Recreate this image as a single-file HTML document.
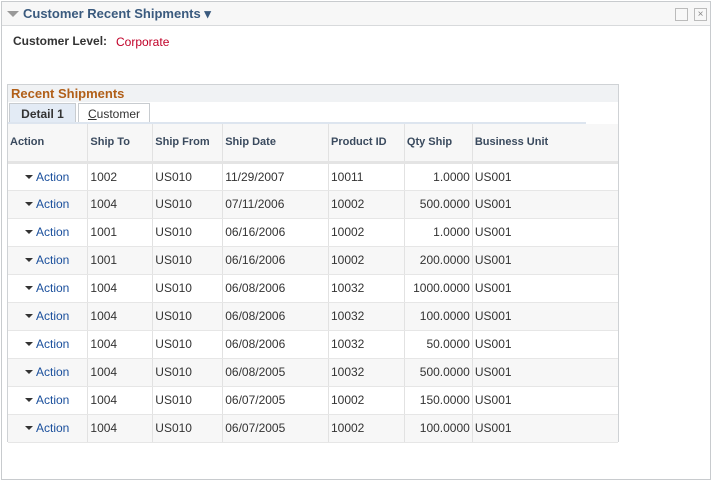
<!DOCTYPE html>
<html><head><style>
*{margin:0;padding:0;box-sizing:border-box}
body{width:713px;height:484px;background:#fff;font-family:"Liberation Sans",Arial,sans-serif;position:relative;overflow:hidden}
.frame{position:absolute;left:1px;top:1px;width:710px;height:479px;border:1px solid #c8cbce;}
.hdr{position:absolute;left:0;top:0;width:708px;height:24px;background:#f7f7f7;border-bottom:1px solid #d8dadc}
.ttl{position:absolute;left:21px;top:4px;font-size:13px;font-weight:bold;color:#3a5a7e}
.tri{position:absolute;left:5px;top:9px;width:0;height:0;border-left:6px solid transparent;border-right:6px solid transparent;border-top:6px solid #999}
.btn{position:absolute;top:6px;width:13px;height:13px;border:1px solid #bbb;background:#f8f8f8}
.lbl{position:absolute;left:13px;top:34px;font-size:12px;font-weight:bold;color:#333}
.val{position:absolute;left:116px;top:35px;font-size:12px;color:#c00028}
.grid{position:absolute;left:7px;top:84px;width:612px;height:358px;border:1px solid #cfd2d5}
.gt{height:17px;background:#f0f2f4;color:#b15f18;font-weight:bold;font-size:13px;padding:1px 0 0 3px}
.tab{position:absolute;top:18px;height:21px;font-size:12px;color:#333;border:1px solid #c8ccd0;border-bottom:none;padding:3px 0 0 0;text-align:center}
table{position:absolute;left:0;top:39px;border-collapse:collapse;font-size:12px;color:#333}
td,th{height:28px;border-left:1px solid #e2e2e2;border-bottom:1px solid #e6e6e6;padding:0 2px;text-align:left;white-space:nowrap}
th{height:38px;background:#f7f7f7;font-size:11px;font-weight:bold;color:#3a4a5e;border-bottom:3px solid #e4e4e4;padding-top:0}
tr.g td{background:#f7f7f7}
td.a{color:#1a4f9c;padding-left:17px}
td.a:before{content:"";display:inline-block;border-left:4px solid transparent;border-right:4px solid transparent;border-top:4px solid #333;margin-right:3px;vertical-align:2px}
td.r{text-align:right;padding-right:2px}
</style></head><body>
<div class="frame">
<div class="hdr"><div class="tri"></div><div class="ttl">Customer Recent Shipments ▾</div>
<div class="btn" style="left:673px"></div><div class="btn" style="left:692px;font-size:10px;color:#888;text-align:center;line-height:11px">×</div></div>
</div>
<div class="lbl">Customer Level:</div><div class="val">Corporate</div>
<div class="grid">
<div class="gt">Recent Shipments</div>
<div class="tab" style="left:1px;width:67px;background:#e3ebf5;font-weight:bold">Detail 1</div>
<div class="tab" style="left:70px;width:72px;background:#fff"><u>C</u>ustomer</div>
<div style="position:absolute;left:0;top:37px;width:578px;height:2px;background:#dde5ef"></div>
<table>
<tr><th style="width:80px;border-left:none">Action</th><th style="width:65px">Ship To</th><th style="width:70px">Ship From</th><th style="width:106px">Ship Date</th><th style="width:76px">Product ID</th><th style="width:68px">Qty Ship</th><th style="width:146px">Business Unit</th></tr>
<tr><td class="a" style="border-left:none">Action</td><td>1002</td><td>US010</td><td>11/29/2007</td><td>10011</td><td class="r">1.0000</td><td>US001</td></tr>
<tr class="g"><td class="a" style="border-left:none">Action</td><td>1004</td><td>US010</td><td>07/11/2006</td><td>10002</td><td class="r">500.0000</td><td>US001</td></tr>
<tr><td class="a" style="border-left:none">Action</td><td>1001</td><td>US010</td><td>06/16/2006</td><td>10002</td><td class="r">1.0000</td><td>US001</td></tr>
<tr class="g"><td class="a" style="border-left:none">Action</td><td>1001</td><td>US010</td><td>06/16/2006</td><td>10002</td><td class="r">200.0000</td><td>US001</td></tr>
<tr><td class="a" style="border-left:none">Action</td><td>1004</td><td>US010</td><td>06/08/2006</td><td>10032</td><td class="r">1000.0000</td><td>US001</td></tr>
<tr class="g"><td class="a" style="border-left:none">Action</td><td>1004</td><td>US010</td><td>06/08/2006</td><td>10032</td><td class="r">100.0000</td><td>US001</td></tr>
<tr><td class="a" style="border-left:none">Action</td><td>1004</td><td>US010</td><td>06/08/2006</td><td>10032</td><td class="r">50.0000</td><td>US001</td></tr>
<tr class="g"><td class="a" style="border-left:none">Action</td><td>1004</td><td>US010</td><td>06/08/2005</td><td>10032</td><td class="r">500.0000</td><td>US001</td></tr>
<tr><td class="a" style="border-left:none">Action</td><td>1004</td><td>US010</td><td>06/07/2005</td><td>10002</td><td class="r">150.0000</td><td>US001</td></tr>
<tr class="g"><td class="a" style="border-left:none">Action</td><td>1004</td><td>US010</td><td>06/07/2005</td><td>10002</td><td class="r">100.0000</td><td>US001</td></tr>
</table>
</div>
</body></html>
